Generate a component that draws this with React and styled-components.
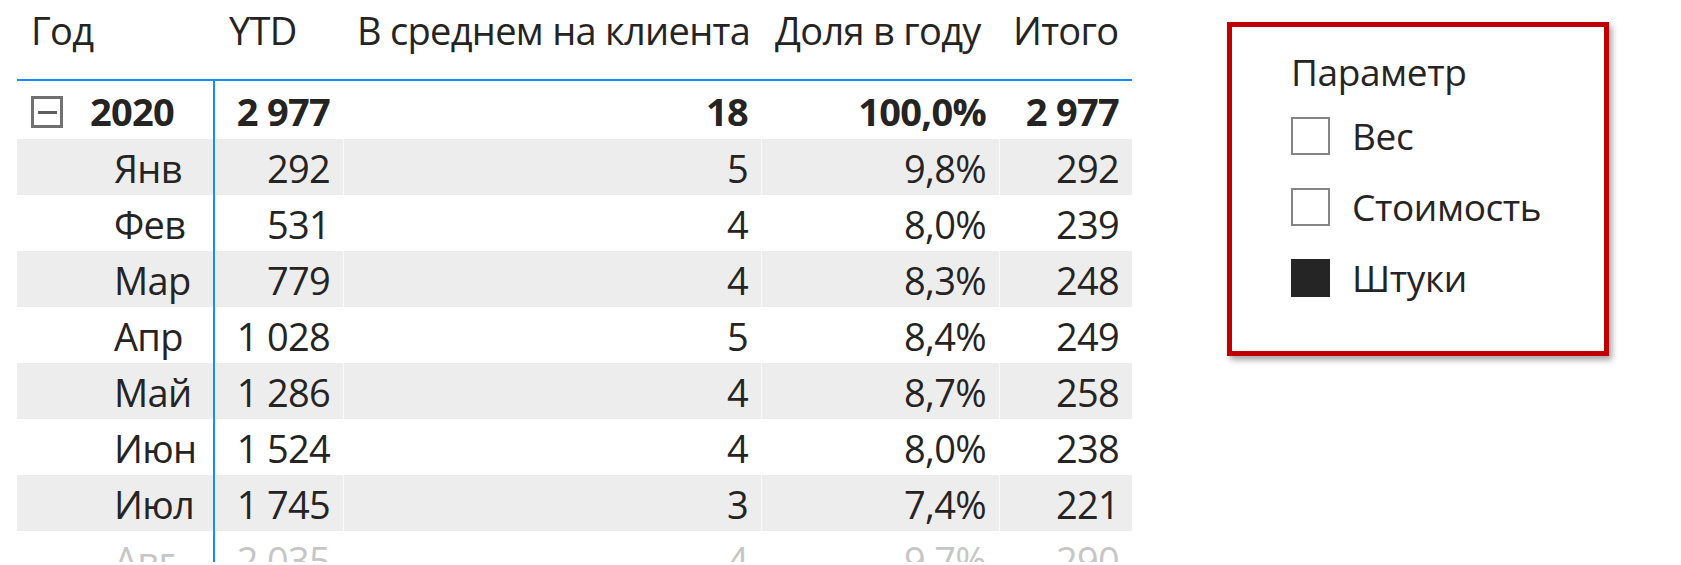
import styled, { createGlobalStyle } from 'styled-components'

const GlobalStyle = createGlobalStyle`
    html, body {
        margin:0;
        padding:0;
        background:#fff;
    }
    body {
        font-family:"Open Sans", "Noto Sans", sans-serif;
        color:#252423;
    }
`

const Pagina = styled.div`
    display:flex;
    align-items:flex-start;
    width:1681px;
    height:565px;
    padding-left:17px;
    box-sizing:border-box;
    overflow:hidden;
`

const Tabla = styled.div`
    display:grid;
    grid-template-columns:198px 128px 418px 238px 133px;
    width:1115px;
    height:562px;
    overflow:hidden;
    font-size:38px;
    letter-spacing:-0.7px;
`

const Encabezado = styled.div`
    height:81px;
    padding:2px 0 0 14px;
    box-sizing:border-box;
    line-height:56px;
    white-space:nowrap;
    border-bottom:2px solid #118dff;
`

const Celda = styled.div`
    display:flex;
    align-items:center;
    justify-content:flex-end;
    height:${props => props.alto}px;
    padding:2px 13px 0 0;
    box-sizing:border-box;
    line-height:56px;
    white-space:nowrap;
    font-weight:${props => props.total ? 700 : 400};
    color:${props => props.faded ? '#c6c6c6' : '#252423'};
    background:${props => props.gris ? '#ededed' : '#fff'};
    border-left:1px solid rgba(255,255,255,0.7);
`

const CeldaGrupo = styled(Celda)`
    justify-content:flex-start;
    padding:2px 0 0 ${props => props.total ? 14 : 97}px;
    border-left:none;
    border-right:2px solid #118dff;
`

const Expandir = styled.span`
    width:32px;
    height:32px;
    margin:2px 27px 0 0;
    border:3px solid #707070;
    box-sizing:border-box;
    display:flex;
    align-items:center;
    justify-content:center;

    &::after {
        content:'';
        width:19px;
        height:3px;
        background:#606060;
    }
`

const Segmentacion = styled.div`
    width:382px;
    height:334px;
    margin-top:22px;
    margin-left:95px;
    padding:23px 0 0 59px;
    box-sizing:border-box;
    border:5px solid #c00000;
    box-shadow:3px 4px 6px rgba(0,0,0,0.35);
    display:flex;
    flex-direction:column;
    font-size:37px;
    letter-spacing:-0.4px;
`

const Titulo = styled.div`
    line-height:44px;
    margin-bottom:23px;
`

const Lista = styled.div`
    display:flex;
    flex-direction:column;
    gap:33px;
`

const Opcion = styled.div`
    display:flex;
    align-items:center;
    height:38px;
    line-height:38px;
    gap:22px;
`

const Casilla = styled.span`
    width:39px;
    height:38px;
    box-sizing:border-box;
    border:2px solid ${props => props.activa ? '#252525' : '#858585'};
    background:${props => props.activa ? '#252525' : '#fff'};
`

const columnas = ['Год', 'YTD', 'В среднем на клиента', 'Доля в году', 'Итого']

const meses = [
    ['Янв', '292', '5', '9,8%', '292'],
    ['Фев', '531', '4', '8,0%', '239'],
    ['Мар', '779', '4', '8,3%', '248'],
    ['Апр', '1 028', '5', '8,4%', '249'],
    ['Май', '1 286', '4', '8,7%', '258'],
    ['Июн', '1 524', '4', '8,0%', '238'],
    ['Июл', '1 745', '3', '7,4%', '221'],
    ['Авг', '2 035', '4', '9,7%', '290'],
]

const opciones = [
    { nombre: 'Вес', activa: false },
    { nombre: 'Стоимость', activa: false },
    { nombre: 'Штуки', activa: true },
]

function App() {
  return (
    <>
        <GlobalStyle />
        <Pagina>
            <Tabla>
                {columnas.map(c => <Encabezado key={c}>{c}</Encabezado>)}

                <CeldaGrupo total alto={58}>
                    <Expandir />
                    2020
                </CeldaGrupo>
                {['2 977', '18', '100,0%', '2 977'].map((v, i) => (
                    <Celda key={'t' + i} total alto={58}>{v.replace(' ', '\u00a0')}</Celda>
                ))}

                {meses.map((fila, n) => fila.map((v, i) => {
                    const Tipo = i === 0 ? CeldaGrupo : Celda
                    return (
                        <Tipo
                            key={fila[0] + i}
                            gris={n % 2 === 0}
                            faded={n === 7}
                            alto={56}
                        >
                            {v.replace(' ', '\u00a0')}
                        </Tipo>
                    )
                }))}
            </Tabla>

            <Segmentacion>
                <Titulo>Параметр</Titulo>
                <Lista>
                    {opciones.map(o => (
                        <Opcion key={o.nombre}>
                            <Casilla activa={o.activa} />
                            {o.nombre}
                        </Opcion>
                    ))}
                </Lista>
            </Segmentacion>
        </Pagina>
    </>
  )
}

export default App
